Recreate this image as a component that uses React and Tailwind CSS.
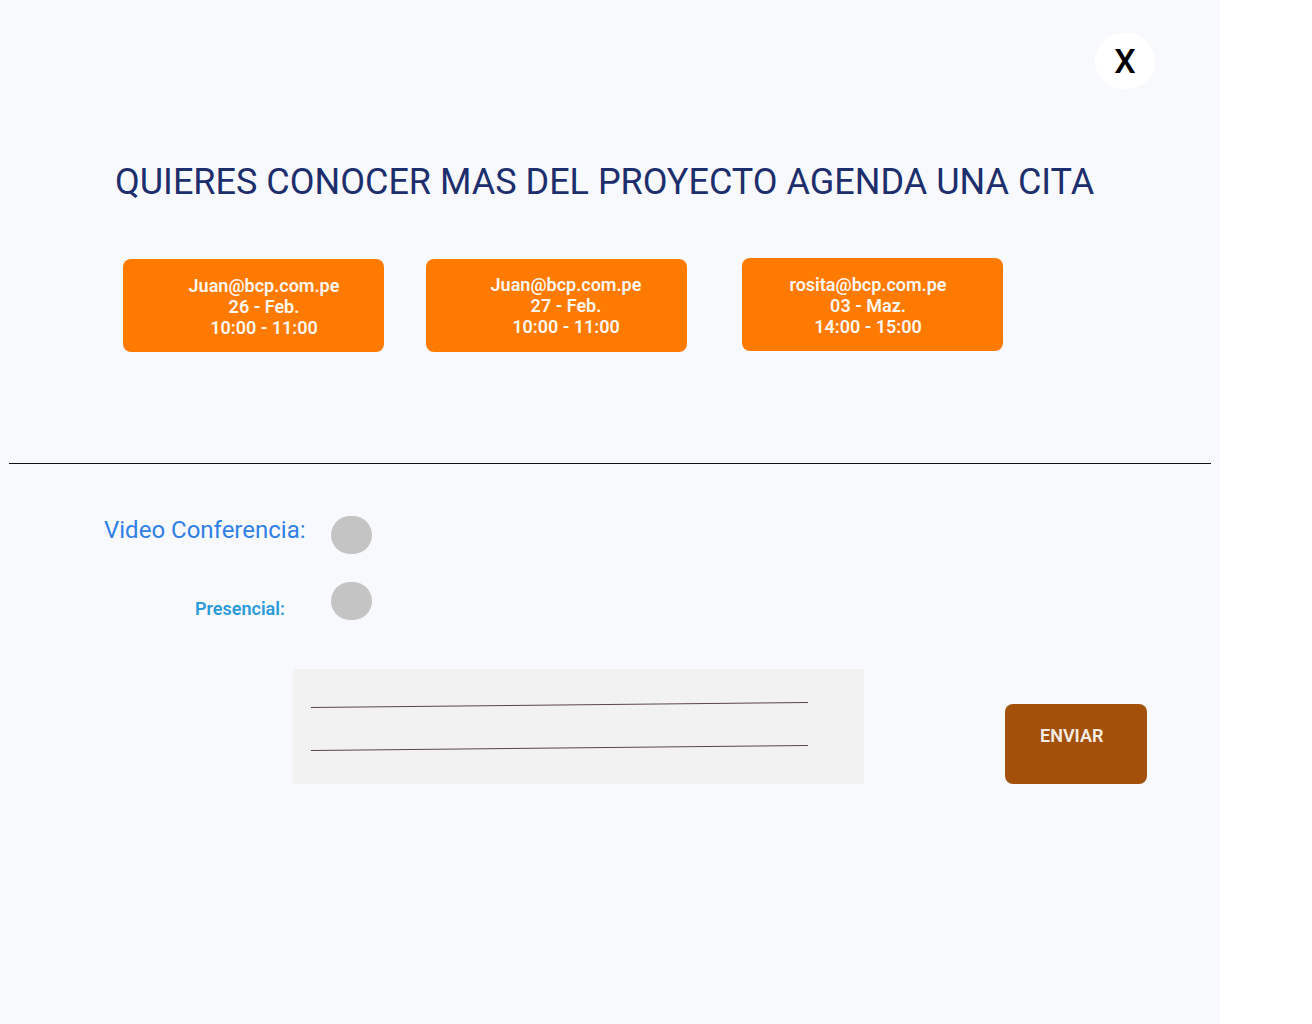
import React from 'react'

const slots = [
  { email: 'Juan@bcp.com.pe', day: '26 - Feb.', hours: '10:00 - 11:00', shift: 'pl-[21px]' },
  { email: 'Juan@bcp.com.pe', day: '27 - Feb.', hours: '10:00 - 11:00', shift: 'pl-[19px] -mt-[1px]' },
  { email: 'rosita@bcp.com.pe', day: '03 - Maz.', hours: '14:00 - 15:00', shift: 'pr-[9px]' },
]

function SlotCard({ slot, className }) {
  return (
    <div className={`w-[261px] h-[93px] rounded-[8px] bg-[#ff7a00] pt-[16px] ${className}`}>
      <div className={`text-center text-[18px] leading-[21px] font-semibold text-[#fbf6f0] ${slot.shift}`}>
        <div>{slot.email}</div>
        <div>{slot.day}</div>
        <div>{slot.hours}</div>
      </div>
    </div>
  )
}

export default function App() {
  return (
    <div className="w-full min-h-[1024px] bg-white font-['Roboto',sans-serif]">
      <div className="w-[1220px] min-h-[1024px] bg-[#f8f9fc] flex flex-col">
        {/* close */}
        <div className="flex justify-end pt-[33px] pr-[65px]">
          <button className="w-[60px] h-[56px] rounded-full bg-white flex items-center justify-center text-[34px] leading-none font-medium text-black">
            X
          </button>
        </div>

        <h1 className="mt-[72px] pl-[115px] text-[36px] leading-[42px] font-normal text-[#1c2e6c]">
          QUIERES CONOCER MAS DEL PROYECTO AGENDA UNA CITA
        </h1>

        <div className="mt-[56px] pl-[123px] flex items-start">
          <SlotCard slot={slots[0]} />
          <SlotCard slot={slots[1]} className="ml-[42px]" />
          <SlotCard slot={slots[2]} className="ml-[55px] -mt-[1px]" />
        </div>

        <div className="mt-[111px] mx-[9px] h-px bg-[#111111]" />

        {/* modalidad */}
        <div className="mt-[52px] flex items-start h-[38px]">
          <span className="pl-[104px] w-[331px] text-[24px] leading-[28px] text-[#2f7fe4]">Video Conferencia:</span>
          <span className="w-[41px] h-[38px] rounded-full bg-[#c4c4c4]" />
        </div>
        <div className="mt-[28px] flex items-start h-[38px]">
          <span className="pl-[195px] w-[331px] pt-[17px] text-[18px] leading-[20px] font-semibold text-[#2b9bdb]">Presencial:</span>
          <span className="w-[41px] h-[38px] rounded-full bg-[#c4c4c4]" />
        </div>

        <div className="mt-[49px] flex items-start">
          <div className="ml-[293px] w-[571px] h-[115px] bg-[#f2f2f2]">
            <svg width="571" height="115" viewBox="0 0 571 115">
              <line x1="18" y1="38.5" x2="515" y2="33.5" stroke="#5b4648" strokeWidth="1" />
              <line x1="18" y1="81.5" x2="515" y2="76.5" stroke="#5b4648" strokeWidth="1" />
            </svg>
          </div>
          <div className="ml-[141px] mt-[35px] w-[142px] h-[80px] rounded-[8px] bg-[#a3510a] pt-[22px] pl-[35px] cursor-pointer">
            <span className="block text-[18px] leading-[20px] font-semibold text-[#f4ece4]">ENVIAR</span>
          </div>
        </div>
      </div>
    </div>
  )
}
